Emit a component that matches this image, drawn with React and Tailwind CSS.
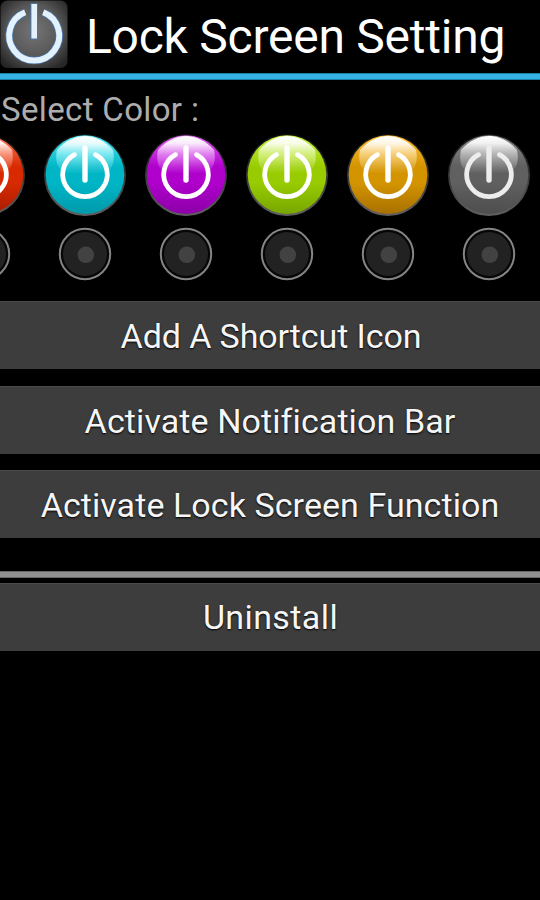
const colors = [
  { name: 'red', light: '#ffb4a0', mid: '#d82a00', dark: '#a81c00', rim: '#ff7a60' },
  { name: 'cyan', light: '#a4f6fc', mid: '#00b6c6', dark: '#009aaa', rim: '#4fe8f2' },
  { name: 'purple', light: '#eea8fa', mid: '#b000cc', dark: '#8c00a8', rim: '#e060f0' },
  { name: 'green', light: '#e6f8a8', mid: '#98cc00', dark: '#78a600', rim: '#c4f040' },
  { name: 'orange', light: '#fde2a8', mid: '#d49400', dark: '#a87000', rim: '#ffbe30' },
  { name: 'gray', light: '#d2d2d2', mid: '#606060', dark: '#4e4e4e', rim: '#8c8c8c' },
];

function PowerBall({ c }) {
  return (
    <svg className="block h-[84px] w-[84px]" viewBox="-42 -42 84 84">
      <defs>
        <linearGradient id={`${c.name}-body`} x1="0" y1="0" x2="0" y2="1">
          <stop offset="0" stopColor={c.rim} />
          <stop offset="0.4" stopColor={c.mid} />
          <stop offset="0.6" stopColor={c.mid} />
          <stop offset="1" stopColor={c.dark} />
        </linearGradient>
        <linearGradient id={`${c.name}-shine`} x1="0" y1="0" x2="0" y2="1">
          <stop offset="0" stopColor="#fff" />
          <stop offset="0.2" stopColor="#fff" stopOpacity="0.88" />
          <stop offset="0.5" stopColor={c.light} stopOpacity="0.65" />
          <stop offset="1" stopColor={c.light} stopOpacity="0" />
        </linearGradient>
        <linearGradient id={`${c.name}-edge`} x1="0" y1="0" x2="0" y2="1">
          <stop offset="0" stopColor="#101010" />
          <stop offset="1" stopColor="#606060" />
        </linearGradient>
      </defs>
      <circle r="41" fill={`url(#${c.name}-edge)`} />
      <circle r="39.3" cy="-0.4" fill={`url(#${c.name}-body)`} />
      <path
        d="M-28 -25C-20 -34 -10 -39 0 -39S20 -34 28 -25C30 -16 28 -8 24 -5C14 0 -14 0 -24 -5C-28 -8 -30 -16 -28 -25Z"
        fill={`url(#${c.name}-shine)`}
      />
      <g fill="none" stroke={c.name === 'gray' ? '#ededed' : '#fff'} strokeLinecap="round">
        <path d="M-10.5 -20.3A22.3 22.3 0 1 0 10.5 -20.3" strokeWidth="4.8" />
        <path d="M0 -27V5" strokeWidth="5.4" />
      </g>
    </svg>
  );
}

function Radio() {
  return (
    <svg className="mt-[10px] block h-[54px] w-[54px]" viewBox="-27 -27 54 54">
      <circle r="25.2" fill="#060606" stroke="#858585" strokeWidth="2" />
      <circle r="22" fill="#222" />
      <circle cx="0.8" cy="0.8" r="8.3" fill="#424242" />
    </svg>
  );
}

function AppIcon() {
  return (
    <svg className="block h-[70px] w-[69px] shrink-0" viewBox="0 0 69 70">
      <defs>
        <radialGradient id="tile" cx="0.5" cy="0.45" r="0.65">
          <stop offset="0" stopColor="#747474" />
          <stop offset="0.6" stopColor="#575757" />
          <stop offset="1" stopColor="#262626" />
        </radialGradient>
      </defs>
      <rect x="0.5" y="0.5" width="67" height="67.5" rx="7" fill="url(#tile)" />
      <g fill="none">
        <g stroke="#4a74a8">
          <path d="M24.6 12.4A25 25 0 1 0 43.8 12.4" strokeWidth="7.6" />
          <path d="M34.2 3V39.5" strokeWidth="7.6" />
        </g>
        <g stroke="#e2f1fc">
          <path d="M25.2 12.2A25 25 0 1 0 43.2 12.2" strokeWidth="6" />
          <path d="M34.2 4V38.5" strokeWidth="5.6" />
        </g>
      </g>
    </svg>
  );
}

function Button({ children, className }) {
  return (
    <button
      className={`flex h-[68px] w-full items-center justify-center whitespace-nowrap border-t border-[#4a4a4a] bg-[#3d3d3d] text-[34px] leading-[40px] text-[#f6f6f6] [text-shadow:0_1px_2px_#000] ${className}`}
    >
      {children}
    </button>
  );
}

export default function App() {
  return (
    <main className="flex h-[900px] w-[540px] flex-col overflow-hidden bg-black font-['Roboto',sans-serif]">
      <header className="flex h-[73px] shrink-0 items-start">
        <AppIcon />
        <h1 className="ml-[17px] mt-[9px] whitespace-nowrap text-[48px] leading-[56px] tracking-[-0.25px] text-white">
          Lock Screen Setting
        </h1>
      </header>
      <div className="h-[7px] shrink-0 border-y border-[#1d7fa8] bg-[#35b4e4]" />
      <p className="mt-[10px] h-[40px] shrink-0 pl-px text-[33px] leading-[40px] tracking-[0.35px] text-[#adadad]">
        Select Color :
      </p>
      <div className="-ml-[67px] mt-[3px] flex h-[148px] shrink-0">
        {colors.map((c) => (
          <div key={c.name} className="flex w-[101px] shrink-0 flex-col items-center">
            <PowerBall c={c} />
            <Radio />
          </div>
        ))}
      </div>
      <section className="mt-[20px] flex shrink-0 flex-col">
        <Button className="pl-[2px] tracking-[-0.1px]">Add A Shortcut Icon</Button>
        <Button className="mt-[17px] tracking-[0.1px]">Activate Notification Bar</Button>
        <Button className="mt-[16px] tracking-[0.07px]">Activate Lock Screen Function</Button>
      </section>
      <div className="mt-[33px] h-[7px] shrink-0 border-y border-[#666] bg-[#919191]" />
      <Button className="mt-[5px] shrink-0 pb-[2px] pl-px tracking-[0.4px]">Uninstall</Button>
    </main>
  );
}
